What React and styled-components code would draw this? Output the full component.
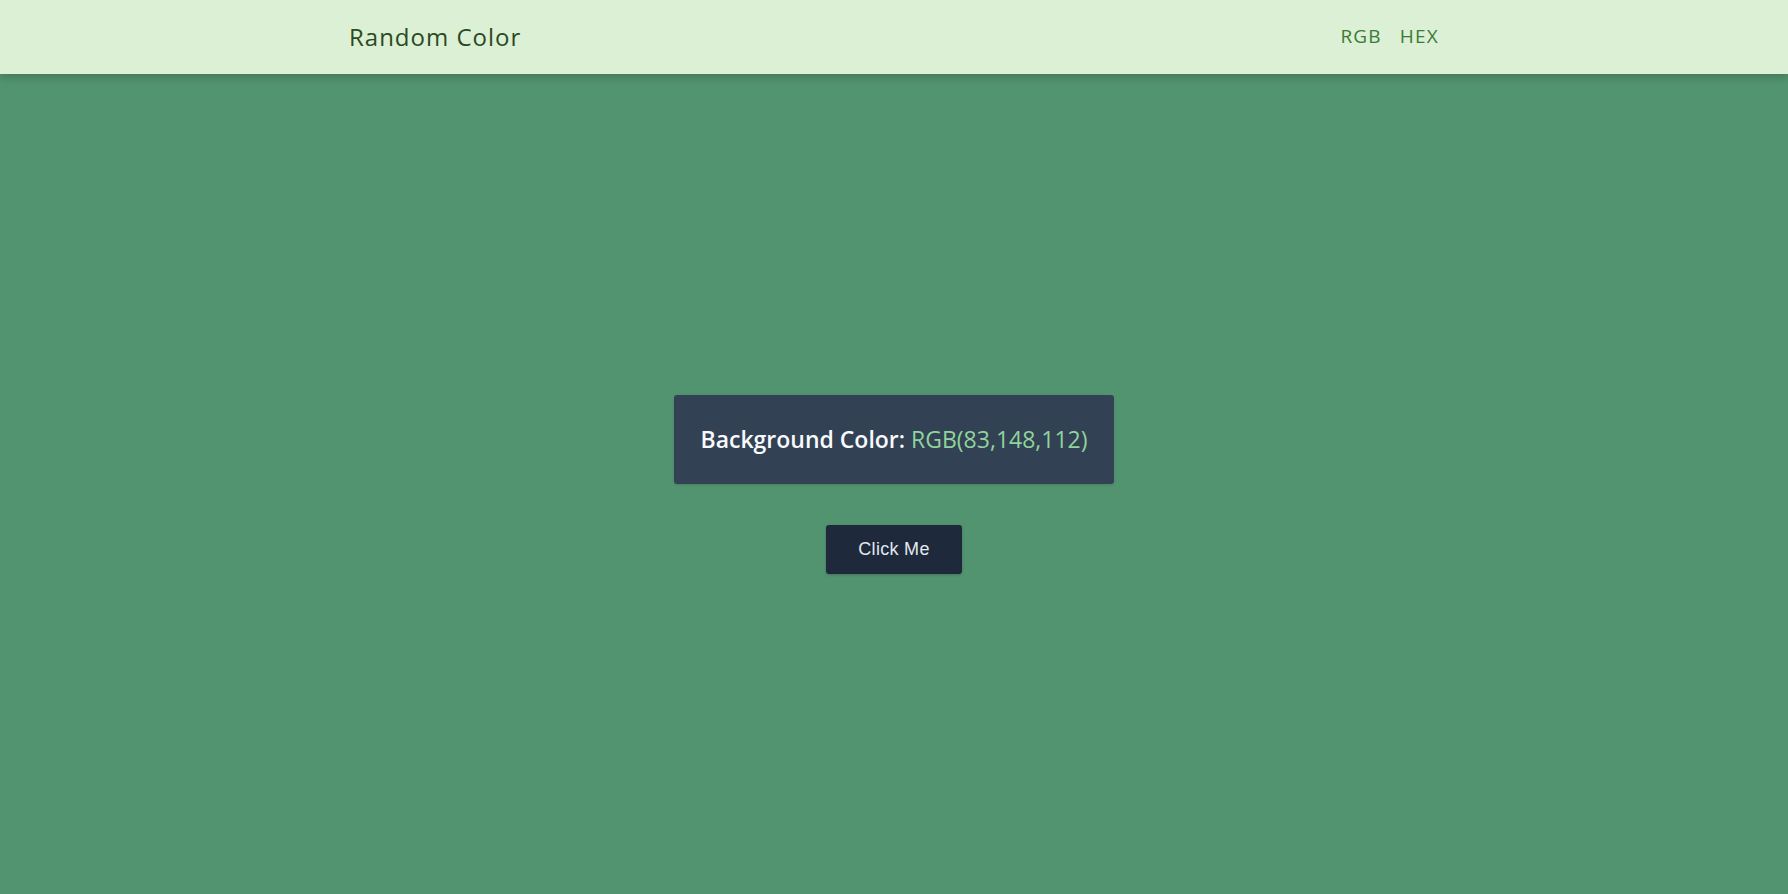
import styled, { createGlobalStyle } from 'styled-components';

const GlobalStyle = createGlobalStyle`
  html, body {
    margin: 0;
    padding: 0;
    height: 100%;
  }
  body {
    font-family: 'Open Sans', 'Liberation Sans', sans-serif;
    background-color: rgb(83, 148, 112);
  }
  #root {
    min-height: 100vh;
    display: flex;
    flex-direction: column;
  }
`;

const App = () => {
  const color = 'RGB(83,148,112)';

  return (
    <>
      <GlobalStyle />
      <NavBar>
        <NavInner>
          <Brand>Random Color</Brand>
          <NavLinks>
            <NavLink>RGB</NavLink>
            <NavLink>HEX</NavLink>
          </NavLinks>
        </NavInner>
      </NavBar>
      <Main>
        <ColorCard>
          Background Color: <ColorValue>{color}</ColorValue>
        </ColorCard>
        <Button>Click Me</Button>
      </Main>
    </>
  );
};

export default App;

const NavBar = styled.header`
  height: 74px;
  background-color: #dbf0d4;
  box-shadow: 0 4px 8px rgba(0, 0, 0, 0.18);
  position: relative;
  z-index: 1;
`;

const NavInner = styled.nav`
  max-width: 1152px;
  height: 100%;
  margin: 0 auto;
  padding: 0 32px;
  box-sizing: border-box;
  display: flex;
  align-items: center;
  justify-content: space-between;
`;

const Brand = styled.span`
  font-family: 'Open Sans', sans-serif;
  font-size: 24px;
  letter-spacing: 1px;
  color: #2b4a24;
  margin-left: -1px;
  margin-top: -2px;
`;

const NavLinks = styled.div`
  display: flex;
  gap: 18px;
  margin-right: -1px;
  margin-top: -2px;
`;

const NavLink = styled.a`
  font-family: 'Open Sans', sans-serif;
  font-size: 19px;
  letter-spacing: 1.2px;
  color: #3b7a37;
  cursor: pointer;
`;

const Main = styled.main`
  flex: 1;
  display: flex;
  flex-direction: column;
  align-items: center;
  justify-content: center;
  gap: 41px;
`;

const ColorCard = styled.div`
  background-color: #334155;
  color: #f8fafc;
  border-radius: 3px;
  box-shadow: 0 1px 3px rgba(0, 0, 0, 0.15);
  height: 89px;
  padding: 0 26px;
  box-sizing: border-box;
  display: flex;
  align-items: center;
  font-family: 'Open Sans', sans-serif;
  font-weight: 600;
  font-size: 23px;
  white-space: pre;
`;

const ColorValue = styled.span`
  color: #8fd49b;
  font-weight: 500;
`;

const Button = styled.button`
  width: 136px;
  height: 49px;
  background-color: #1e293b;
  color: #e2e8f0;
  border: none;
  border-radius: 3px;
  box-shadow: 0 1px 3px rgba(0, 0, 0, 0.2);
  font-family: 'Liberation Sans', Arial, sans-serif;
  font-size: 18px;
  letter-spacing: 0.3px;
  cursor: pointer;
`;
